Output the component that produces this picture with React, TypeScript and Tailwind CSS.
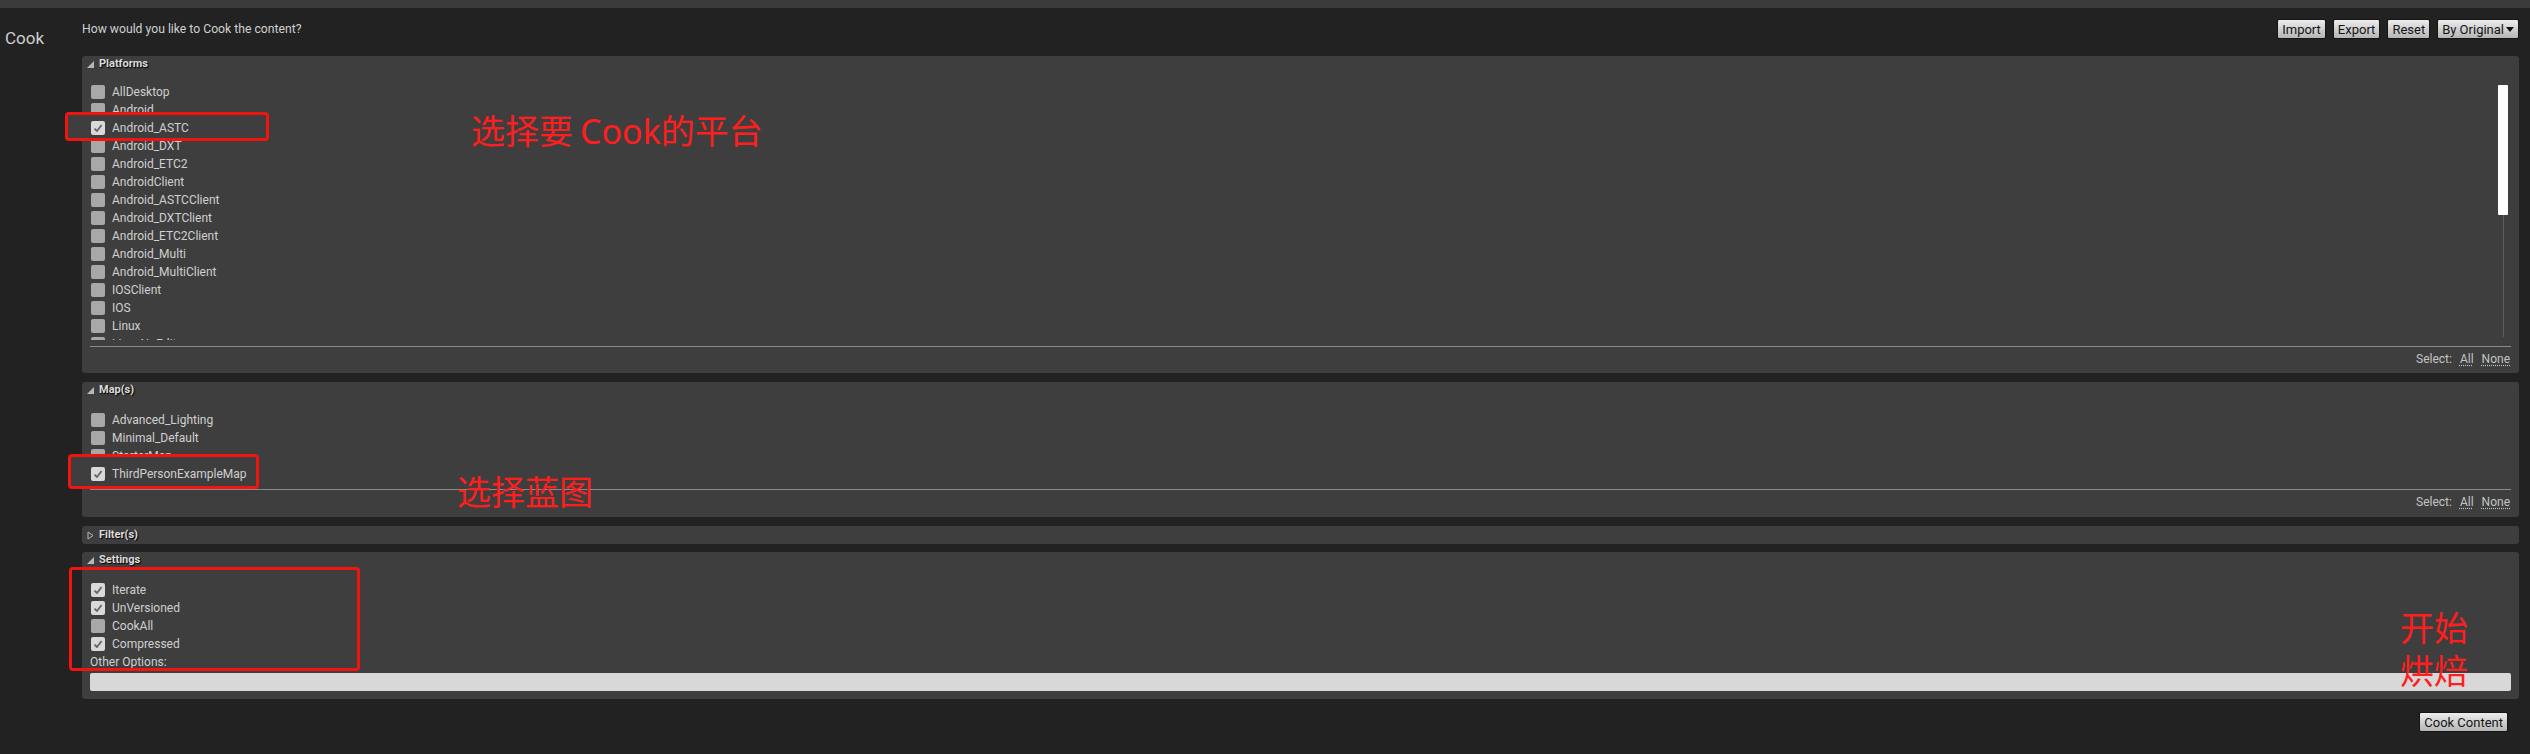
import React from 'react';

const platforms = [
  'AllDesktop',
  'Android',
  'Android_ASTC',
  'Android_DXT',
  'Android_ETC2',
  'AndroidClient',
  'Android_ASTCClient',
  'Android_DXTClient',
  'Android_ETC2Client',
  'Android_Multi',
  'Android_MultiClient',
  'IOSClient',
  'IOS',
  'Linux',
  'LinuxNoEditor',
];

const maps = ['Advanced_Lighting', 'Minimal_Default', 'StarterMap', 'ThirdPersonExampleMap'];

const settings = [
  { label: 'Iterate', checked: true },
  { label: 'UnVersioned', checked: true },
  { label: 'CookAll', checked: false },
  { label: 'Compressed', checked: true },
];

const CheckBox = ({ checked }: { checked?: boolean }) => (
  <span
    className={`flex h-[14px] w-[14px] shrink-0 items-center justify-center rounded-[2px] ${
      checked ? 'bg-[#d9d9d9]' : 'bg-[#a8a8a8]'
    }`}
  >
    {checked && (
      <svg width="10" height="10" viewBox="0 0 10 10">
        <path d="M1.5 5.6 L4 8 L8.6 2" fill="none" stroke="#6b6b6b" strokeWidth="2" strokeLinejoin="round" />
      </svg>
    )}
  </span>
);

// a red annotation frame; it paints over the rows next to it, the marked row sits on top
const Row = ({ label, checked, mark }: { label: string; checked?: boolean; mark?: string }) => (
  <div className="relative flex h-[18px] items-center pl-px">
    {mark && <div className={mark} />}
    <div className={`flex items-center gap-[7px] ${mark ? 'relative z-20' : ''}`}>
      <CheckBox checked={checked} />
      <span className="text-[12px] leading-[18px] text-[#d0d0d0]">{label}</span>
    </div>
  </div>
);

const Header = ({ title, open = true }: { title: string; open?: boolean }) => (
  <div className="flex h-[16px] items-center gap-[5px] pl-[5px]">
    {open ? (
      <svg width="7" height="7" viewBox="0 0 7 7">
        <polygon points="7,0 7,7 0,7" fill="#b8b8b8" />
      </svg>
    ) : (
      <svg width="7" height="9" viewBox="0 0 7 9">
        <polygon points="1,1 6,4.5 1,8" fill="none" stroke="#b8b8b8" strokeWidth="1" />
      </svg>
    )}
    <span className="text-[11px] font-bold text-[#dcdcdc] [text-shadow:1px_1px_1px_#000]">{title}</span>
  </div>
);

const SelectRow = () => (
  <div className="mt-[3px] flex h-[18px] items-center justify-end gap-[8px] pr-px text-[12px] text-[#c4c4c4]">
    <span>Select:</span>
    <span className="underline decoration-dotted underline-offset-2">All</span>
    <span className="underline decoration-dotted underline-offset-2">None</span>
  </div>
);

const Btn = ({ children }: { children: React.ReactNode }) => (
  <button className="flex h-[20px] items-center rounded-[2px] border border-[#151515] bg-linear-to-b from-[#ededed] to-[#b5b5b5] px-[4px] text-[13px] leading-none text-[#141414]">
    {children}
  </button>
);

const Annotation = ({ children, className }: { children: React.ReactNode; className: string }) => (
  <div className={`absolute font-['Noto_Sans_CJK_SC',sans-serif] text-[34px] text-[#ff1e1e] ${className}`}>{children}</div>
);

export default function App() {
  return (
    <div className="min-h-[754px] w-[2530px] bg-[#222222] font-[Roboto,sans-serif]">
      <div className="h-[8px] bg-[#3b3b3b]" />
      <div className="flex">
        <div className="w-[82px] pl-[5px] pt-[20px] text-[17px] leading-[20px] text-[#cfcfcf]">Cook</div>

        <div className="flex w-[2437px] flex-col">
          {/* toolbar */}
          <div className="mt-[11px] flex h-[20px] items-center justify-between">
            <span className="text-[12.2px] text-[#d0d0d0]">How would you like to Cook the content?</span>
            <div className="flex gap-[7px]">
              <Btn>Import</Btn>
              <Btn>Export</Btn>
              <Btn>Reset</Btn>
              <Btn>
                By Original
                <svg className="ml-[2px]" width="8" height="5" viewBox="0 0 8 5">
                  <polygon points="0,0 8,0 4,5" fill="#111" />
                </svg>
              </Btn>
            </div>
          </div>

          {/* Platforms */}
          <div className="relative mt-[17px] rounded-[3px] bg-[#3e3e3e] pb-[5px]">
            <Header title="Platforms" />
            <div className="mt-[11px] flex px-[8px]">
              <div className="h-[257px] flex-1 overflow-y-clip">
                {platforms.map((p) => (
                  <Row
                    key={p}
                    label={p}
                    checked={p === 'Android_ASTC'}
                    mark={
                      p === 'Android_ASTC'
                        ? 'absolute left-[-25px] top-[-7px] z-10 h-[29px] w-[204px] rounded-[4px] border-[3px] border-[#f0150f] bg-[#3e3e3e]'
                        : undefined
                    }
                  />
                ))}
              </div>
              <div className="mr-[3px] flex w-[10px] flex-col">
                <div className="mt-[2px] h-[130px] rounded-[1px] bg-white" />
                <div className="mx-auto h-[122px] w-px bg-[#5c5c5c]" />
              </div>
            </div>
            <div className="mx-[8px] mt-[6px] h-px bg-[#8a8a8a]" />
            <div className="px-[8px]">
              <SelectRow />
            </div>
            <Annotation className="left-[389px] top-[57px] leading-[34px]">
              选择要<span className="ml-[7px] font-['Noto_Sans',sans-serif]">Cook</span>的平台
            </Annotation>
          </div>

          {/* Maps */}
          <div className="relative mt-[9px] rounded-[3px] bg-[#3e3e3e] pb-[6px]">
            <Header title="Map(s)" />
            <div className="mt-[13px] px-[8px]">
              {maps.map((m) => (
                <Row
                  key={m}
                  label={m}
                  checked={m === 'ThirdPersonExampleMap'}
                  mark={
                    m === 'ThirdPersonExampleMap'
                      ? 'absolute left-[-22px] top-[-11px] z-10 h-[35px] w-[191px] rounded-[4px] border-[3px] border-[#f0150f] bg-[#3e3e3e]'
                      : undefined
                  }
                />
              ))}
            </div>
            <div className="mx-[8px] mt-[6px] h-px bg-[#8a8a8a]" />
            <div className="px-[8px]">
              <SelectRow />
            </div>
            <Annotation className="left-[375px] top-[92px] leading-[34px]">选择蓝图</Annotation>
          </div>

          {/* Filters */}
          <div className="mt-[9px] flex h-[18px] items-center rounded-[3px] bg-[#3e3e3e]">
            <Header title="Filter(s)" open={false} />
          </div>

          {/* Settings */}
          <div className="relative mt-[8px] rounded-[3px] bg-[#3e3e3e] pb-[8px]">
            <Header title="Settings" />
            <div className="relative mt-[13px] px-[8px]">
              <div className="absolute left-[-13px] top-[-14px] h-[104px] w-[291px] rounded-[4px] border-[3px] border-[#f0150f]" />
              {settings.map((s) => (
                <Row key={s.label} label={s.label} checked={s.checked} />
              ))}
              <div className="flex h-[18px] items-center text-[12px] text-[#d0d0d0]">Other Options:</div>
              <div className="mt-[2px] h-[18px] rounded-[2px] bg-[#d8d8d8]" />
            </div>
            <Annotation className="right-[51px] top-[53px] leading-[43px]">
              开始
              <br />
              烘焙
            </Annotation>
          </div>

          <div className="mt-[13px] flex justify-end pr-[11px]">
            <Btn>Cook Content</Btn>
          </div>
        </div>
      </div>
    </div>
  );
}
